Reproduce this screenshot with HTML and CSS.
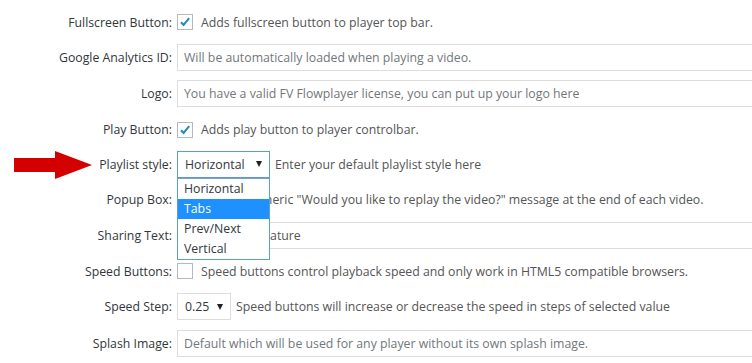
FILE: index.html
```html
<!DOCTYPE html>
<html>
<head>
<meta charset="utf-8">
<link rel="stylesheet" href="styles.css">
</head>
<body>
<div class="form">
  <div class="row">
    <span class="lbl">Fullscreen Button:</span>
    <div class="field">
      <span class="cb"><svg viewBox="0 0 16 16" width="16" height="16"><path d="M4 8.2 L6.6 11 L12.2 4.2" fill="none" stroke="#1e8cbe" stroke-width="2"/></svg></span>
      <span class="desc">Adds fullscreen button to player top bar.</span>
    </div>
  </div>
  <div class="row">
    <span class="lbl">Google Analytics ID:</span>
    <div class="field"><span class="input">Will be automatically loaded when playing a video.</span></div>
  </div>
  <div class="row">
    <span class="lbl">Logo:</span>
    <div class="field"><span class="input">You have a valid FV Flowplayer license, you can put up your logo here</span></div>
  </div>
  <div class="row">
    <span class="lbl">Play Button:</span>
    <div class="field">
      <span class="cb"><svg viewBox="0 0 16 16" width="16" height="16"><path d="M4 8.2 L6.6 11 L12.2 4.2" fill="none" stroke="#1e8cbe" stroke-width="2"/></svg></span>
      <span class="desc">Adds play button to player controlbar.</span>
    </div>
  </div>
  <div class="row">
    <span class="lbl">Playlist style:</span>
    <div class="field">
      <div class="select open">
        <span class="sel-val">Horizontal</span><span class="caret"></span>
        <ul class="options">
          <li>Horizontal</li>
          <li class="hl">Tabs</li>
          <li>Prev/Next</li>
          <li>Vertical</li>
        </ul>
      </div>
      <span class="desc">Enter your default playlist style here</span>
    </div>
  </div>
  <div class="row">
    <span class="lbl">Popup Box:</span>
    <div class="field">
      <span class="cb"></span>
      <span class="desc">Shows a generic "Would you like to replay the video?" message at the end of each video.</span>
    </div>
  </div>
  <div class="row">
    <span class="lbl">Sharing Text:</span>
    <div class="field"><span class="input value">Text to share feature</span></div>
  </div>
  <div class="row">
    <span class="lbl">Speed Buttons:</span>
    <div class="field">
      <span class="cb"></span>
      <span class="desc">Speed buttons control playback speed and only work in HTML5 compatible browsers.</span>
    </div>
  </div>
  <div class="row">
    <span class="lbl">Speed Step:</span>
    <div class="field">
      <div class="select small"><span class="sel-val">0.25</span><span class="caret"></span></div>
      <span class="desc">Speed buttons will increase or decrease the speed in steps of selected value</span>
    </div>
  </div>
  <div class="row">
    <span class="lbl">Splash Image:</span>
    <div class="field"><span class="input">Default which will be used for any player without its own splash image.</span></div>
  </div>
</div>
<svg class="pointer" width="78" height="28" viewBox="0 0 78 28"><polygon points="0,7 41,7 41,0 78,14 41,28 41,21 0,21" fill="#d40000"/></svg>
</body>
</html>
```
FILE: styles.css
```css
html, body {
  margin: 0;
  padding: 0;
  overflow: hidden;
  background: #fff;
}
body {
  font-family: "Open Sans", "Noto Sans", sans-serif;
  font-size: 12.3px;
  color: #444;
  width: 752px;
  height: 363px;
  position: relative;
}
.form {
  display: grid;
  grid-template-columns: 172px 600px;
  column-gap: 5px;
  grid-template-rows: 34px 36px 37px 35px 34px 36px 36px 36px 35px 38px;
  padding-top: 5px;
  align-items: center;
}
.row {
  display: contents;
}
.lbl {
  text-align: right;
  color: #32373c;
  white-space: nowrap;
}
.field {
  display: flex;
  align-items: center;
  white-space: nowrap;
}
.cb {
  width: 14px;
  height: 14px;
  border: 1px solid #b4b9be;
  background: #fff;
  display: inline-flex;
  align-items: center;
  justify-content: center;
  margin-right: 8px;
  flex: none;
}
.cb svg {
  width: 16px;
  height: 16px;
  flex: none;
}
.desc {
  color: #555;
}
.input {
  box-sizing: border-box;
  width: 600px;
  height: 27px;
  border: 1px solid #ddd;
  display: flex;
  align-items: center;
  padding-left: 6px;
  color: #72777c;
}
.input.value {
  color: #555;
  padding-left: 3px;
}
.select {
  position: relative;
  box-sizing: border-box;
  height: 27px;
  border: 1px solid #ddd;
  display: flex;
  align-items: center;
  padding: 0 7px 0 7px;
  margin-right: 5px;
  color: #32373c;
}
.select.open {
  width: 93px;
  border-color: #5b9dd9;
}
.select.small {
  width: 54px;
}
.sel-val {
  flex: 1;
}
.caret {
  width: 0;
  height: 0;
  border-left: 3.5px solid transparent;
  border-right: 3.5px solid transparent;
  border-top: 6px solid #222;
}
.options {
  position: absolute;
  left: -1px;
  top: 26px;
  width: 93px;
  box-sizing: border-box;
  margin: 0;
  padding: 0;
  list-style: none;
  border: 1px solid #5b9dd9;
  border-top-color: #7a9cd3;
  background: #fff;
  z-index: 2;
}
.options li {
  height: 20px;
  line-height: 20px;
  padding-left: 6px;
  color: #32373c;
}
.options li.hl {
  background: #1e90ff;
  color: #fff;
}
.pointer {
  position: absolute;
  left: 14px;
  top: 151px;
}
```
